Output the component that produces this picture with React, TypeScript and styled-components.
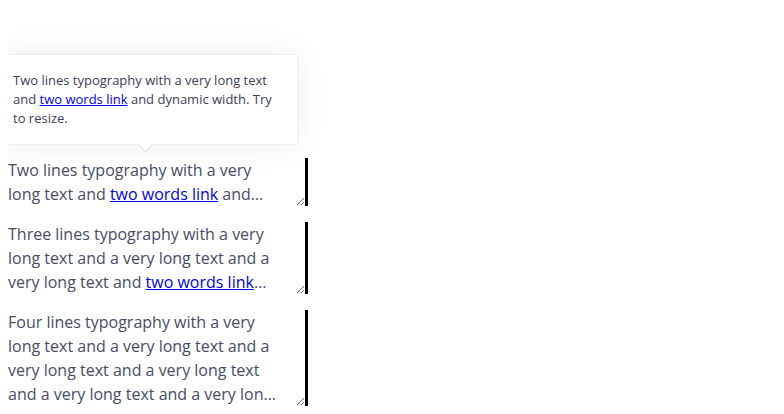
import React from "react";
import styled, { createGlobalStyle } from "styled-components";

const Global = createGlobalStyle`
  html, body { margin: 0; padding: 0; background: #fff; }
  body { margin: 8px; font-family: "Open Sans", "Liberation Sans", sans-serif; }
`;

const Page = styled.div`
  position: relative;
  display: flex;
  flex-direction: column;
  gap: 16px;
  padding-top: 150px;
`;

const Tooltip = styled.div`
  position: absolute;
  left: -11px;
  top: 47px;
  width: 300px;
  box-sizing: border-box;
  padding: 16px;
  background: #fff;
  box-shadow: 0 0 32px rgba(0, 0, 0, 0.08), 0 0 2px rgba(0, 0, 0, 0.1);
  font-size: 13px;
  line-height: 19px;
  color: #3d4059;
  z-index: 2;
`;

const Arrow = styled.span`
  position: absolute;
  left: 144px;
  bottom: -5px;
  width: 9px;
  height: 9px;
  background: #fff;
  transform: rotate(45deg);
  box-shadow: 1px 1px 1px rgba(0, 0, 0, 0.1);
`;

const TooltipText = styled.div`
  position: relative;
  z-index: 1;
`;

const Box = styled.div`
  width: 300px;
  box-sizing: border-box;
  border-right: 3px solid #000;
  resize: horizontal;
  overflow: hidden;
`;

const Clamp = styled.p<{ $lines: number }>`
  margin: 0;
  font-size: 16px;
  line-height: 24px;
  color: #474d66;
  display: -webkit-box;
  -webkit-box-orient: vertical;
  -webkit-line-clamp: ${(p) => p.$lines};
  overflow: hidden;
  padding-right: 27px;
`;

const Link = styled.a`
  color: #0000ee;
  text-decoration: underline;
`;

export default function App() {
  return (
    <>
      <Global />
      <Page>
        <Tooltip>
          <TooltipText>
            Two lines typography with a very long text and <Link href="#">two words link</Link> and dynamic width. Try to resize.
          </TooltipText>
          <Arrow />
        </Tooltip>
        <Box>
          <Clamp $lines={2}>
            Two lines typography with a very long text and <Link href="#">two words link</Link> and dynamic width. Try to resize.
          </Clamp>
        </Box>
        <Box>
          <Clamp $lines={3}>
            Three lines typography with a very long text and a very long text and a very long text and <Link href="#">two words link</Link> and dynamic width. Try to resize.
          </Clamp>
        </Box>
        <Box>
          <Clamp $lines={4}>
            Four lines typography with a very long text and a very long text and a very long text and a very long text and a very long text and a very long text and <Link href="#">two words link</Link> and dynamic width. Try to resize.
          </Clamp>
        </Box>
      </Page>
    </>
  );
}
